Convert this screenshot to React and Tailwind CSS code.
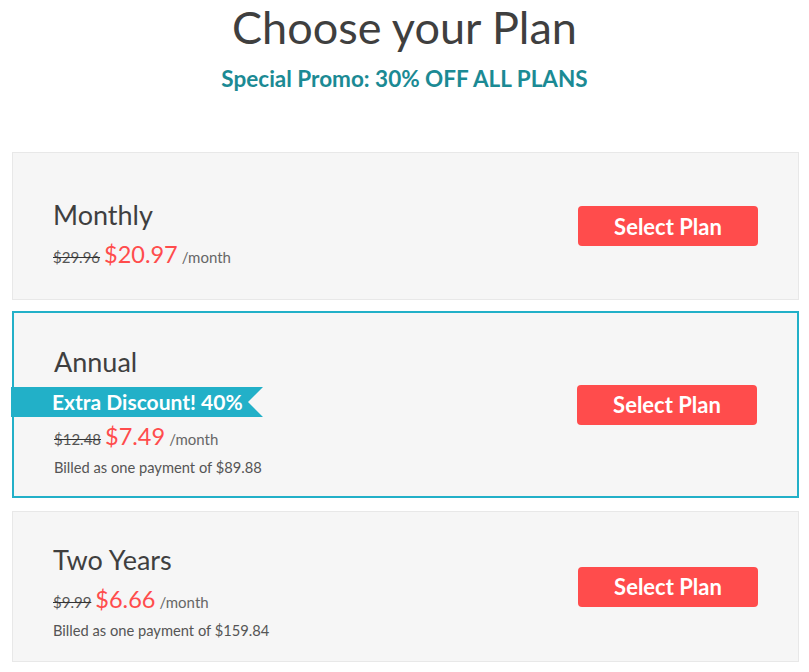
const plans = [
  {
    name: "Monthly",
    old: "$29.96",
    price: "$20.97",
    billed: null,
    ribbon: null,
    featured: false,
    wrap: "mt-0",
    body: "pt-[45px] pb-[30px]",
    priceGap: "mt-[7px]",
  },
  {
    name: "Annual",
    old: "$12.48",
    price: "$7.49",
    billed: "Billed as one payment of $89.88",
    ribbon: "Extra Discount! 40%",
    featured: true,
    wrap: "mt-[11px]",
    body: "pt-[32px] pb-[19px]",
    priceGap: "mt-[4px]",
  },
  {
    name: "Two Years",
    old: "$9.99",
    price: "$6.66",
    billed: "Billed as one payment of $159.84",
    ribbon: null,
    featured: false,
    wrap: "mt-[13px]",
    body: "pt-[31px] pb-[21px]",
    priceGap: "mt-[7px]",
  },
]

function Plan({ plan }) {
  return (
    <div
      className={
        "flex items-center justify-between bg-[#f6f6f6] " +
        plan.wrap +
        (plan.featured
          ? " border-2 border-[#22b0c8]"
          : " border border-[#e8e8e8]")
      }
    >
      <div className={"flex flex-col " + plan.body}>
        <h2 className="pl-10 text-[27px] leading-[34px] text-[#3f3f3f]">
          {plan.name}
        </h2>

        {/* ribbon */}
        {plan.ribbon && (
          <div className="-ml-[3px] mt-[8px] flex h-[30px] w-[252px] items-center bg-[#22b0c8] pl-[41px] text-[21px] font-bold text-white [clip-path:polygon(0_0,252px_0,237px_50%,252px_100%,0_100%)]">
            {plan.ribbon}
          </div>
        )}

        <div
          className={
            "flex h-[30px] items-baseline gap-[4px] pl-10 leading-[30px] whitespace-nowrap " +
            plan.priceGap
          }
        >
          <span className="text-[15px] text-[#555] line-through decoration-[#333]">
            {plan.old}
          </span>
          <span className="text-[23.5px] text-[#ff4c4c]">{plan.price}</span>
          <span className="text-[15px] text-[#666]">/month</span>
        </div>

        {plan.billed && (
          <p className="mt-[6px] pl-10 text-[14.7px] leading-[20px] text-[#555]">
            {plan.billed}
          </p>
        )}
      </div>

      <button className="mr-10 h-[40px] w-[180px] rounded-[4px] bg-[#ff4c4c] text-[22px] font-bold text-white">
        Select Plan
      </button>
    </div>
  )
}

export default function App() {
  return (
    <div className="min-h-screen bg-white font-['Lato',sans-serif]">

      {/* Header */}

      <div className="flex flex-col items-center text-center">
        <h1 className="text-[45px] leading-[54px] text-[#3f3f3f]">
          Choose your Plan
        </h1>
        <p className="mt-[12px] text-[22.5px] leading-[25px] font-bold text-[#1b8a94]">
          Special Promo: 30% OFF ALL PLANS
        </p>
      </div>

      {/* Plans */}

      <div className="mt-[61px] ml-[12px] mr-[10px]">
        {plans.map((p) => (
          <Plan key={p.name} plan={p} />
        ))}
      </div>

    </div>
  )
}
